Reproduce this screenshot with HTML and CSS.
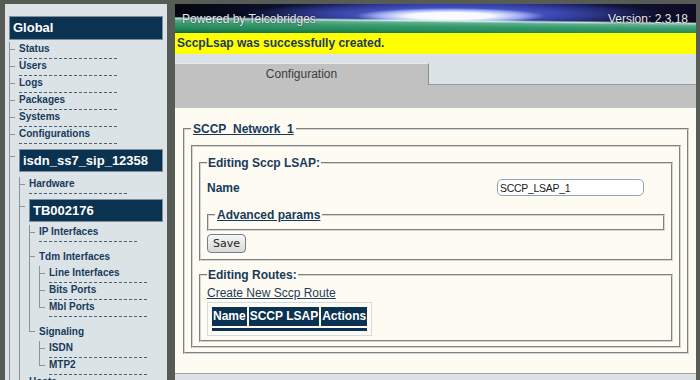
FILE: index.html
```html
<!DOCTYPE html>
<html>
<head>
<meta charset="utf-8">
<link rel="stylesheet" href="styles.css">
</head>
<body>
<div class="page">
  <aside class="sidebar">
    <div class="box box-global">Global</div>
    <ul class="tree">
      <li><span class="elbow"></span><a class="item" href="#">Status</a></li>
      <li><span class="elbow"></span><a class="item" href="#">Users</a></li>
      <li><span class="elbow"></span><a class="item" href="#">Logs</a></li>
      <li><span class="elbow"></span><a class="item" href="#">Packages</a></li>
      <li><span class="elbow"></span><a class="item" href="#">Systems</a></li>
      <li><span class="elbow"></span><a class="item" href="#">Configurations</a></li>
      <li class="node node-top"><span class="elbow"></span>
        <div class="col">
          <div class="box">isdn_ss7_sip_12358</div>
          <ul class="tree">
            <li><span class="elbow"></span><a class="item" href="#">Hardware</a></li>
            <li class="node node-box"><span class="elbow"></span>
              <div class="col">
                <div class="box">TB002176</div>
                <ul class="tree">
                  <li><span class="elbow"></span><a class="item" href="#">IP Interfaces</a></li>
                  <li class="node"><span class="elbow"></span>
                    <div class="col">
                      <span class="label">Tdm Interfaces</span>
                      <ul class="tree">
                        <li><span class="elbow"></span><a class="item" href="#">Line Interfaces</a></li>
                        <li><span class="elbow"></span><a class="item" href="#">Bits Ports</a></li>
                        <li class="last"><span class="elbow"></span><a class="item" href="#">Mbl Ports</a></li>
                      </ul>
                    </div>
                  </li>
                  <li class="node last"><span class="elbow"></span>
                    <div class="col">
                      <span class="label">Signaling</span>
                      <ul class="tree">
                        <li><span class="elbow"></span><a class="item" href="#">ISDN</a></li>
                        <li class="last"><span class="elbow"></span><a class="item" href="#">MTP2</a></li>
                      </ul>
                    </div>
                  </li>
                </ul>
              </div>
            </li>
            <li><span class="elbow"></span><a class="item" href="#">Hosts</a></li>
            <li><span class="elbow"></span><a class="item" href="#">Routes</a></li>
          </ul>
        </div>
      </li>
    </ul>
  </aside>

  <main class="main">
    <header class="banner">
      <span class="powered">Powered by Telcobridges</span>
      <span class="version">Version: 2.3.18</span>
    </header>
    <div class="message">SccpLsap was successfully created.</div>
    <div class="tabs">
      <div class="tab">Configuration</div>
      <div class="tabfill"></div>
    </div>
    <div class="band"></div>
    <div class="cream">
      <fieldset class="fs fs-outer">
        <legend class="lg lg-link">SCCP_Network_1</legend>
        <fieldset class="fs fs-inner">
          <fieldset class="fs fs-edit">
            <legend class="lg">Editing Sccp LSAP:</legend>
            <div class="name-row">
              <span class="name-label">Name</span>
              <input class="name-input" type="text" value="SCCP_LSAP_1">
            </div>
            <fieldset class="fs fs-adv">
              <legend class="lg lg-link">Advanced params</legend>
            </fieldset>
            <button class="save" type="button">Save</button>
          </fieldset>
          <fieldset class="fs fs-routes">
            <legend class="lg">Editing Routes:</legend>
            <a class="create" href="#">Create New Sccp Route</a>
            <div class="tablewrap">
              <table class="routes">
                <thead>
                  <tr><th>Name</th><th>SCCP LSAP</th><th>Actions</th></tr>
                </thead>
                <tbody>
                  <tr class="footrow"><td colspan="3"></td></tr>
                </tbody>
              </table>
            </div>
          </fieldset>
        </fieldset>
      </fieldset>
    </div>
    <div class="bottom"></div>
  </main>
</div>
</body>
</html>
```

FILE: styles.css
```css
html, body {
  margin: 0;
  padding: 0;
  background: #565b56;
  overflow: hidden;
  font-family: "Liberation Sans", Arial, sans-serif;
}

.page {
  display: flex;
  align-items: flex-start;
  padding: 4px 0 0 5px;
  width: 700px;
  height: 380px;
  box-sizing: border-box;
  overflow: hidden;
}

/* ---------- sidebar ---------- */
.sidebar {
  width: 162px;
  min-height: 520px;
  box-sizing: border-box;
  background: #dce3e6;
  padding: 12px 4px 0 4px;
  flex: none;
}

.box {
  background: #0b3250;
  border: 1px solid #7f8e99;
  color: #fff;
  font: bold 13px/21px "Liberation Sans", Arial, sans-serif;
  padding-left: 3px;
  margin-bottom: 3px;
}

.box-global {
  line-height: 22px;
  margin-bottom: 2px;
}

.node-top > .col > .box {
  margin-bottom: 5px;
}

.tree {
  list-style: none;
  margin: 0;
  padding: 0;
}

.tree > li {
  display: flex;
  align-items: flex-start;
  border-left: 1px solid #8c949b;
}

.tree > li.last {
  border-left: 0;
}

.elbow {
  flex: none;
  width: 5px;
  height: 7px;
  border-bottom: 1px solid #8c949b;
  margin-right: 4px;
}

.tree > li.last > .elbow {
  border-left: 1px solid #8c949b;
}

.tree > li.node > .elbow {
  height: 14px;
}

.tree > li.node-top > .elbow {
  height: 12px;
}

.tree > li.node-box > .elbow {
  height: 12px;
}

.col {
  flex: 1;
  min-width: 0;
  padding-top: 7px;
}

.node-top > .col {
  padding-top: 5px;
}

.node-box > .col {
  padding-top: 5px;
}

.item,
.label {
  display: block;
  width: 98px;
  font: bold 10px/14px "Liberation Sans", Arial, sans-serif;
  color: #173a5c;
  padding-bottom: 2px;
  border-bottom: 1px dashed #4a6178;
  text-decoration: none;
}

.label {
  border-bottom-color: transparent;
  padding-top: 1px;
  padding-bottom: 1px;
}

/* ---------- main ---------- */
.main {
  width: 521px;
  margin-left: 8px;
  flex: none;
}

.banner {
  height: 29px;
  box-sizing: border-box;
  display: flex;
  justify-content: space-between;
  align-items: flex-start;
  padding: 8px 8px 0 7px;
  font: 12px/14px "Liberation Sans", Arial, sans-serif;
  color: #e4e9f4;
  text-shadow: 0 0 2px rgba(0, 0, 20, 0.8);
  background:
    linear-gradient(180.6deg, rgba(0,0,0,0) 0%, rgba(0,0,0,0) 52%, rgba(220,245,232,0.9) 57%, #5cb18c 62%, #3a9a6d 72%, #268a5a 86%, #157046 97%, #0f5c37 100%),
    radial-gradient(ellipse 95px 8px at 275px 12px, #ffffff 0%, #f5f8ff 45%, rgba(180,195,255,0.8) 75%, rgba(90,105,230,0) 100%),
    radial-gradient(ellipse 210px 13px at 275px 10px, rgba(110,125,240,0.95) 0%, rgba(75,90,210,0.65) 55%, rgba(40,50,150,0) 100%),
    linear-gradient(90deg, #04060e 0%, #0a0f2a 18%, #161e58 33%, #26318f 48%, #232d85 62%, #171c5a 76%, #10112f 88%, #0d0b22 100%);
}

.message {
  height: 21px;
  background: #ffff00;
  color: #1b3a5c;
  font: bold 12px/21px "Liberation Sans", Arial, sans-serif;
  padding-left: 2px;
}

.tabs {
  display: flex;
  background: #dce3e6;
  padding-top: 9px;
}

.tab {
  width: 253px;
  height: 21px;
  background: #c1c1c1;
  border-top: 1px solid #e9e9e9;
  border-right: 1px solid #8e8e8e;
  text-align: center;
  font: 12px/21px "Liberation Sans", Arial, sans-serif;
  color: #3c3c3c;
}

.tabfill {
  flex: 1;
  border-bottom: 1px solid #9b9b9b;
}

.band {
  height: 23px;
  background: #c1c1c1;
}

.cream {
  background: #fefbf2;
  padding: 14px 7px 19px 8px;
  border-bottom: 1px solid #a3a3a3;
}

.bottom {
  height: 40px;
  background: #dce3e6;
}

/* ---------- fieldsets ---------- */
.fs {
  margin: 0;
  border: 2px groove #d4d4d4;
  min-width: 0;
}

.lg {
  padding: 0 2px;
  font: bold 12px/14px "Liberation Sans", Arial, sans-serif;
  color: #173a5c;
}

.lg-link {
  text-decoration: underline;
}

.fs-outer {
  padding: 9px 6px 4px 6px;
}

.fs-inner {
  padding: 9px 6px 4px 6px;
}

.fs-edit {
  padding: 9px 6px 6px 6px;
}

.fs-edit > .lg,
.fs-routes > .lg {
  padding: 0 1px;
}

.name-row {
  display: grid;
  grid-template-columns: 290px 147px;
  align-items: center;
  height: 17px;
}

.name-label {
  font: bold 12px/14px "Liberation Sans", Arial, sans-serif;
  color: #173a5c;
}

.name-input {
  width: 147px;
  height: 17px;
  box-sizing: border-box;
  border: 1px solid #8fa4b8;
  border-radius: 5px;
  padding: 0 2px;
  margin: 0;
  background: #fff;
  color: #1a1a1a;
  font: 10.5px/15px "Liberation Sans", Arial, sans-serif;
  letter-spacing: -0.3px;
  outline: none;
}

.fs-adv {
  margin-top: 12px;
  padding: 0 6px 7px 6px;
}

.save {
  display: block;
  margin-top: 3px;
  width: 39px;
  height: 19px;
  padding: 0;
  border: 1px solid #6f8192;
  border-radius: 4px;
  background: linear-gradient(#f6f6f4, #d9d9d6);
  color: #222;
  font: 11px "DejaVu Sans", sans-serif;
}

.fs-routes {
  margin-top: 7px;
  padding: 4px 6px 4px 6px;
}

.create {
  display: block;
  font: 12px/14px "Liberation Sans", Arial, sans-serif;
  color: #1e3d5c;
  text-decoration: underline;
}

.tablewrap {
  display: flex;
  width: max-content;
  margin-top: 2px;
  border: 1px solid #d3dbe0;
  padding: 2px;
}

.routes {
  border-spacing: 2px;
  margin: 0;
}

.routes th {
  background: #0b3250;
  color: #fff;
  font: bold 12px/15px "Liberation Sans", Arial, sans-serif;
  padding: 2px 1px;
  text-align: left;
}

.routes .footrow td {
  background: #0b3250;
  height: 3px;
  padding: 0;
}
```
